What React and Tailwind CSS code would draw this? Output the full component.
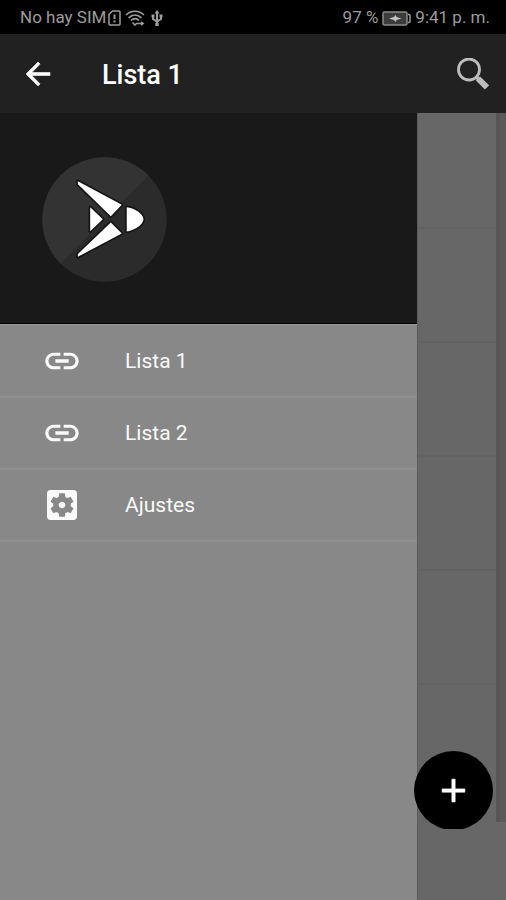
function StatusBar() {
  return (
    <div className="flex h-[34px] items-center bg-black pl-5 pr-4 pt-0.5 text-[17px] text-[#9c9c9c]">
      <span className="flex flex-1 items-center whitespace-nowrap">
        No hay SIM
        <svg className="ml-0.5 h-4 w-[13px]" viewBox="0 0 13 16" fill="none" stroke="currentColor" strokeWidth="1.5">
          <path d="M4.5 1H11a1 1 0 0 1 1 1v12a1 1 0 0 1-1 1H2a1 1 0 0 1-1-1V4.5z" />
          <path d="M6.500 4.500v4.500M6.500 10.500v2" strokeWidth="2" />
        </svg>
        <svg className="ml-1 h-4 w-5" viewBox="0 0 20 16" fill="none" stroke="currentColor" strokeWidth="1.600">
          <path d="M1 5c5-5 13-5 18 0M3.500 7.800c4-3.700 9-3.700 13 0M6 10.500c2.500-2.300 5.500-2.300 8 0" />
          <path d="M7.500 12.500l2.500 2.500 2-2M12 13.500h6M16 12l2 1.500-2 1.500" />
        </svg>
        <svg className="ml-1.5 h-4 w-3" viewBox="0 0 12 16" fill="none" stroke="currentColor" strokeWidth="2">
          <path d="M6 2v12M2 6v3l4 2.500 4-2.500V6" />
          <path d="M6 0l2.500 3.500h-5zM4.300 13h3.400v3H4.300zM.5 4.500h3v2.800h-3zM8.500 4.500h3v2.800h-3z" fill="currentColor" stroke="none" />
        </svg>
      </span>
      <span>97 %</span>
      <svg className="mx-1 h-[15px] w-[29px]" viewBox="0 0 29 15">
        <rect x="1" y="1" width="24" height="13" rx="1.500" fill="#3c3c3c" stroke="#8a8a8a" strokeWidth="1.500" />
        <path d="M26 3.500h1a1 1 0 0 1 1 1v6a1 1 0 0 1-1 1h-1" fill="none" stroke="#9c9c9c" strokeWidth="1.500" />
        <path d="M7 7.500l5-1.500 1.500-2 1 2 5 1.500-5 1.500-1 2-1.500-2z" fill="#c4c4c4" />
      </svg>
      <span className="whitespace-nowrap">9:41 p. m.</span>
    </div>
  );
}

function AppBar() {
  return (
    <header className="flex h-[79px] items-center bg-[#212121] pl-5 pr-[17px] text-white">
      <button type="button" aria-label="Volver" className="flex size-9 items-center justify-center">
        <svg className="size-9" viewBox="0 0 24 24" fill="currentColor" stroke="currentColor" strokeWidth="0.400">
          <path d="M20 11H7.830l5.590-5.590L12 4l-8 8 8 8 1.410-1.410L7.830 13H20v-2z" />
        </svg>
      </button>
      <h1 className="flex-1 pl-[46px] pt-1 text-[27px] font-medium">Lista 1</h1>
      <button type="button" aria-label="Buscar" className="size-8">
        <svg className="size-8" viewBox="0 0 32 32" fill="none" stroke="#bdbdbd">
          <circle cx="12" cy="11.500" r="10.500" strokeWidth="2.800" />
          <path d="M19 18.500l4 4" strokeWidth="3.500" />
          <path d="M21 20.500l9 9" strokeWidth="6" />
        </svg>
      </button>
    </header>
  );
}

function Logo() {
  return (
    <svg className="size-[125px]" viewBox="37 35 376 376" role="img" aria-label="Logo">
      <circle cx="225" cy="223" r="187" fill="#2b2b2b" />
      <path d="M357.300 90.700A187 187 0 0 0 92.700 355.300z" fill="#333333" />
      <g fill="#fff" stroke="#141414" strokeWidth="10" strokeLinejoin="round" paintOrder="stroke">
        <path d="M145 108L277 179L244 213L145 117z" />
        <path d="M145 335L277 265L244 232L145 327z" />
        <path d="M182 186L220 222L182 258z" />
        <path d="M292 186C312 188 342 204 342 222C342 240 312 256 292 259z" />
      </g>
    </svg>
  );
}

function LinkIcon() {
  return (
    <svg className="size-10" viewBox="0 0 24 24" fill="currentColor" aria-hidden="true">
      <path d="M3.900 12c0-1.710 1.390-3.100 3.100-3.100h4V7H7c-2.760 0-5 2.240-5 5s2.240 5 5 5h4v-1.900H7c-1.710 0-3.100-1.390-3.100-3.100zM8 13h8v-2H8v2zm9-6h-4v1.900h4c1.710 0 3.100 1.390 3.100 3.100s-1.390 3.100-3.100 3.100h-4V17h4c2.760 0 5-2.240 5-5s-2.240-5-5-5z" />
    </svg>
  );
}

function SettingsIcon() {
  return (
    <svg className="size-10" viewBox="0 0 24 24" fill="currentColor" aria-hidden="true">
      <path d="M12 10c-1.100 0-2 .9-2 2s.9 2 2 2 2-.9 2-2-.9-2-2-2zm7-7H5c-1.110 0-2 .9-2 2v14c0 1.100.89 2 2 2h14c1.110 0 2-.9 2-2V5c0-1.100-.89-2-2-2zm-1.750 9c0 .23-.02.46-.05.68l1.480 1.160c.13.11.17.3.08.45l-1.400 2.420c-.09.15-.27.21-.43.15l-1.740-.7c-.36.28-.76.51-1.180.69l-.26 1.850c-.03.17-.18.3-.35.3h-2.800c-.17 0-.32-.13-.35-.29l-.26-1.850c-.43-.18-.82-.41-1.180-.69l-1.740.7c-.16.06-.34 0-.43-.15l-1.400-2.420c-.09-.15-.05-.34.08-.45l1.480-1.160c-.03-.23-.05-.46-.05-.69s.02-.46.05-.68l-1.480-1.160c-.13-.11-.17-.3-.08-.45l1.400-2.420c.09-.15.27-.21.43-.15l1.740.7c.36-.28.76-.51 1.180-.69l.26-1.850c.03-.17.18-.3.35-.3h2.800c.17 0 .32.13.35.29l.26 1.850c.43.18.82.41 1.180.69l1.740-.7c.16-.06.34 0 .43.15l1.400 2.420c.09.15.05.34-.08.45l-1.480 1.160c.03.23.05.46.05.69z" />
    </svg>
  );
}

const entries = [
  { label: "Lista 1", Icon: LinkIcon },
  { label: "Lista 2", Icon: LinkIcon },
  { label: "Ajustes", Icon: SettingsIcon },
];

function Drawer() {
  return (
    <nav className="flex w-[82.4%] flex-col bg-[#888888]">
      <div className="flex h-[211px] items-start border-b border-black bg-[#191919] pl-[42px] pt-11">
        <Logo />
      </div>
      <ul className="border-t border-[#999999] pt-px">
        {entries.map(({ label, Icon }) => (
          <li key={label} className="border-b-2 border-[#919191]">
            <a href="#" className="flex h-[70px] items-center pl-[42px] text-[21px] text-[#fafafa]">
              <Icon />
              <span className="pl-[43px] pt-0.5">{label}</span>
            </a>
          </li>
        ))}
      </ul>
    </nav>
  );
}

function Backdrop() {
  return (
    <main className="flex flex-1 border-l border-[#5b5b5b] bg-[#676767]">
      <div className="flex-1 pt-0.5">
        {[1, 2, 3, 4, 5].map((row) => (
          <div key={row} className="h-[114px] border-b-2 border-[#626262]" />
        ))}
      </div>
      <div className="mb-[78px] w-2.5 border-l-4 border-[#565656] bg-[#5a5a5a]" />
    </main>
  );
}

export default function App() {
  return (
    <div className="relative flex min-h-screen flex-col font-[Roboto,sans-serif]">
      <StatusBar />
      <AppBar />
      <div className="flex flex-1">
        <Drawer />
        <Backdrop />
      </div>
      <button
        type="button"
        aria-label="Agregar"
        className="absolute bottom-[70px] right-[13px] flex size-[79px] items-center justify-center rounded-full bg-black text-white [clip-path:inset(0_0_1px_0)]"
      >
        <svg className="size-[39px]" viewBox="0 0 24 24" fill="currentColor" stroke="currentColor" strokeWidth="0.400">
          <path d="M19 13h-6v6h-2v-6H5v-2h6V5h2v6h6v2z" />
        </svg>
      </button>
    </div>
  );
}
